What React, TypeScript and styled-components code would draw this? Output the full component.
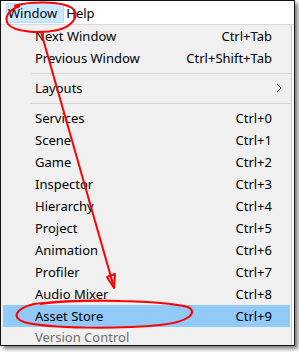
import styled, { createGlobalStyle } from "styled-components";

const Global = createGlobalStyle`
  html, body {
    margin: 0;
    background: #fff;
  }
  body {
    font-family: "Noto Sans", "Liberation Sans", sans-serif;
  }
`;

const Stage = styled.div`
  position: relative;
  width: 299px;
  height: 352px;
  overflow: hidden;
`;

const Frame = styled.div`
  width: 295px;
  height: 346px;
  box-sizing: border-box;
  border: 1px solid #111;
  box-shadow: 3px 3px 4px rgba(0, 0, 0, 0.5);
  display: flex;
  flex-direction: column;
  overflow: hidden;
  background: #fff;
`;

const MenuBar = styled.div`
  height: 23px;
  display: flex;
  align-items: center;
  padding-left: 5px;
  border-bottom: 1px solid #d9d9d9;
  background: #fff;
  flex-shrink: 0;
`;

const BarItem = styled.div<{ $active?: boolean }>`
  height: 20px;
  box-sizing: border-box;
  display: flex;
  align-items: center;
  padding: 0 6px 0 1px;
  font-size: 13px;
  color: #000;
  background: ${(p) => (p.$active ? "#cce8ff" : "transparent")};
  border: 1px solid ${(p) => (p.$active ? "#b3dcfb" : "transparent")};
`;

const Dropdown = styled.div`
  flex: 1;
  min-height: 0;
  background: #f0f0f0;
  border-right: 1px solid #c8c8c8;
  margin-right: 2px;
  display: flex;
  flex-direction: column;
`;

const Item = styled.div<{ $selected?: boolean; $disabled?: boolean }>`
  height: 22px;
  flex-shrink: 0;
  display: flex;
  align-items: center;
  margin: 0 1px 0 2px;
  padding: 0 18px 0 32px;
  font-size: 13px;
  color: ${(p) => (p.$disabled ? "#6d6d6d" : "#000")};
  background: ${(p) => (p.$selected ? "#91c9f7" : "transparent")};
`;

/* last row: only partly visible in the cut, so it takes what space is left */
const TailItem = styled(Item)`
  height: auto;
  flex: 1 1 auto;
  min-height: 0;
  line-height: 16px;
  padding-top: 1px;
`;

const Label = styled.span`
  flex: 1;
  white-space: nowrap;
`;

const Shortcut = styled.span`
  white-space: nowrap;
  text-align: right;
`;

const Chevron = styled.svg`
  width: 8px;
  height: 10px;
  margin-right: -11px;
`;

const Separator = styled.div`
  height: 8px;
  flex-shrink: 0;
  display: flex;
  align-items: center;
  padding-left: 30px;
  &::after {
    content: "";
    flex: 1;
    height: 1px;
    background: #d7d7d7;
  }
`;

const Annotations = styled.svg`
  position: absolute;
  left: 0;
  top: 0;
  width: 299px;
  height: 352px;
  pointer-events: none;
`;

const top = [
  { label: "Next Window", keys: "Ctrl+Tab" },
  { label: "Previous Window", keys: "Ctrl+Shift+Tab" },
];

const windows = [
  "Services",
  "Scene",
  "Game",
  "Inspector",
  "Hierarchy",
  "Project",
  "Animation",
  "Profiler",
  "Audio Mixer",
  "Asset Store",
];

export default function App() {
  return (
    <Stage>
      <Global />
      <Frame>
        <MenuBar>
          <BarItem $active>Window</BarItem>
          <BarItem>Help</BarItem>
        </MenuBar>
        <Dropdown>
          {top.map((t) => (
            <Item key={t.label}>
              <Label>{t.label}</Label>
              <Shortcut>{t.keys}</Shortcut>
            </Item>
          ))}
          <Separator />
          <Item>
            <Label>Layouts</Label>
            <Chevron viewBox="0 0 8 10">
              <path d="M2 1 L6 5 L2 9" fill="none" stroke="#333" strokeWidth="1" />
            </Chevron>
          </Item>
          <Separator />
          {windows.map((w, i) => (
            <Item key={w} $selected={w === "Asset Store"}>
              <Label>{w}</Label>
              <Shortcut>Ctrl+{i}</Shortcut>
            </Item>
          ))}
          <TailItem $disabled>
            <Label>Version Control</Label>
          </TailItem>
        </Dropdown>
      </Frame>
      <Annotations viewBox="0 0 299 352">
        <g fill="none" stroke="#f00" strokeWidth="2" strokeLinejoin="round">
          <path d="M14 6 C30 1 62 1 72 8 C80 14 74 26 58 30 C40 34 14 32 8 24 C4 18 8 10 20 6" />
          <path d="M41 32 L113 284" />
          <path d="M107 277 L115 274 L114 288 Z" />
          <path d="M40 304 C80 299 160 300 188 307 C198 312 190 322 160 325 C120 329 50 329 24 322 C12 318 14 309 34 304 C60 300 100 300 120 301" />
        </g>
      </Annotations>
    </Stage>
  );
}
